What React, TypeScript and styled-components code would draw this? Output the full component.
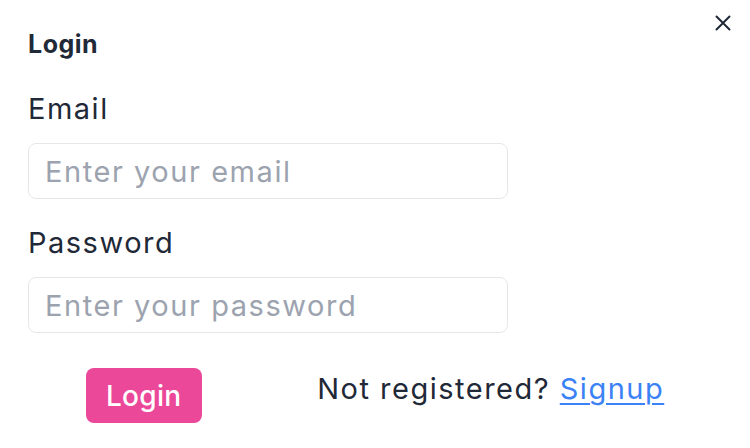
import React from "react";
import styled, { createGlobalStyle } from "styled-components";

const GlobalStyle = createGlobalStyle`
  html, body {
    margin: 0;
    padding: 0;
    background: #ffffff;
  }
  body {
    font-family: "Inter", "Open Sans", sans-serif;
    color: #1f2937;
  }
  * { box-sizing: border-box; }
`;

const Modal = styled.div`
  position: relative;
  width: 750px;
  padding: 28px 28px 24px;
  background: #ffffff;
`;

const CloseButton = styled.button`
  position: absolute;
  top: 15px;
  right: 19px;
  width: 16px;
  height: 16px;
  padding: 0;
  border: none;
  background: transparent;
  color: #1f2937;
  display: flex;
  align-items: center;
  justify-content: center;
  cursor: pointer;
`;

const Title = styled.h2`
  margin: 0;
  font-size: 25px;
  line-height: 32px;
  font-weight: 700;
  letter-spacing: 0.5px;
  color: #1f2937;
`;

const Form = styled.form`
  display: flex;
  flex-direction: column;
  margin-top: 31px;
`;

const Field = styled.div<{ $first?: boolean }>`
  display: flex;
  flex-direction: column;
  gap: 16px;
  margin-top: ${(p) => (p.$first ? "0" : "26px")};
  width: 480px;
`;

const Label = styled.label`
  font-size: 29px;
  line-height: 36px;
  font-weight: 400;
  letter-spacing: 1.5px;
  color: #1f2937;
`;

const Input = styled.input`
  width: 480px;
  height: 56px;
  padding: 0 16px;
  border: 1px solid #e5e7eb;
  border-radius: 8px;
  background: #ffffff;
  font-family: "Inter", "Open Sans", sans-serif;
  font-size: 29px;
  letter-spacing: 1.55px;
  color: #1f2937;
  outline: none;
  &::placeholder {
    color: #9ca3af;
  }
`;

const Footer = styled.div`
  display: flex;
  justify-content: space-around;
  align-items: flex-start;
  margin-top: 35px;
  width: 694px;
`;

const SubmitButton = styled.button`
  width: 116px;
  height: 55px;
  padding: 0;
  border: none;
  border-radius: 8px;
  background: #ec4899;
  color: #ffffff;
  font-family: "Inter", "Open Sans", sans-serif;
  font-size: 28px;
  font-weight: 500;
  letter-spacing: 0.3px;
  cursor: pointer;
`;

const Prompt = styled.p`
  margin: 0;
  font-size: 29px;
  line-height: 42px;
  letter-spacing: 1.5px;
  color: #1f2937;
  white-space: nowrap;
`;

const SignupLink = styled.a`
  color: #3b82f6;
  text-decoration: underline;
  text-underline-offset: 4px;
  text-decoration-thickness: 2px;
`;

export default function App() {
  return (
    <>
      <GlobalStyle />
      <Modal>
        <CloseButton aria-label="Close">
          <svg width="16" height="16" viewBox="0 0 16 16" fill="none">
            <path
              d="M1.5 1.5 L14.5 14.5 M14.5 1.5 L1.5 14.5"
              stroke="currentColor"
              strokeWidth="2"
              strokeLinecap="round"
            />
          </svg>
        </CloseButton>
        <Title>Login</Title>
        <Form onSubmit={(e) => e.preventDefault()}>
          <Field $first>
            <Label htmlFor="email">Email</Label>
            <Input id="email" type="email" placeholder="Enter your email" />
          </Field>
          <Field>
            <Label htmlFor="password">Password</Label>
            <Input id="password" type="password" placeholder="Enter your password" />
          </Field>
          <Footer>
            <SubmitButton type="submit">Login</SubmitButton>
            <Prompt>
              Not registered? <SignupLink href="#">Signup</SignupLink>
            </Prompt>
          </Footer>
        </Form>
      </Modal>
    </>
  );
}
